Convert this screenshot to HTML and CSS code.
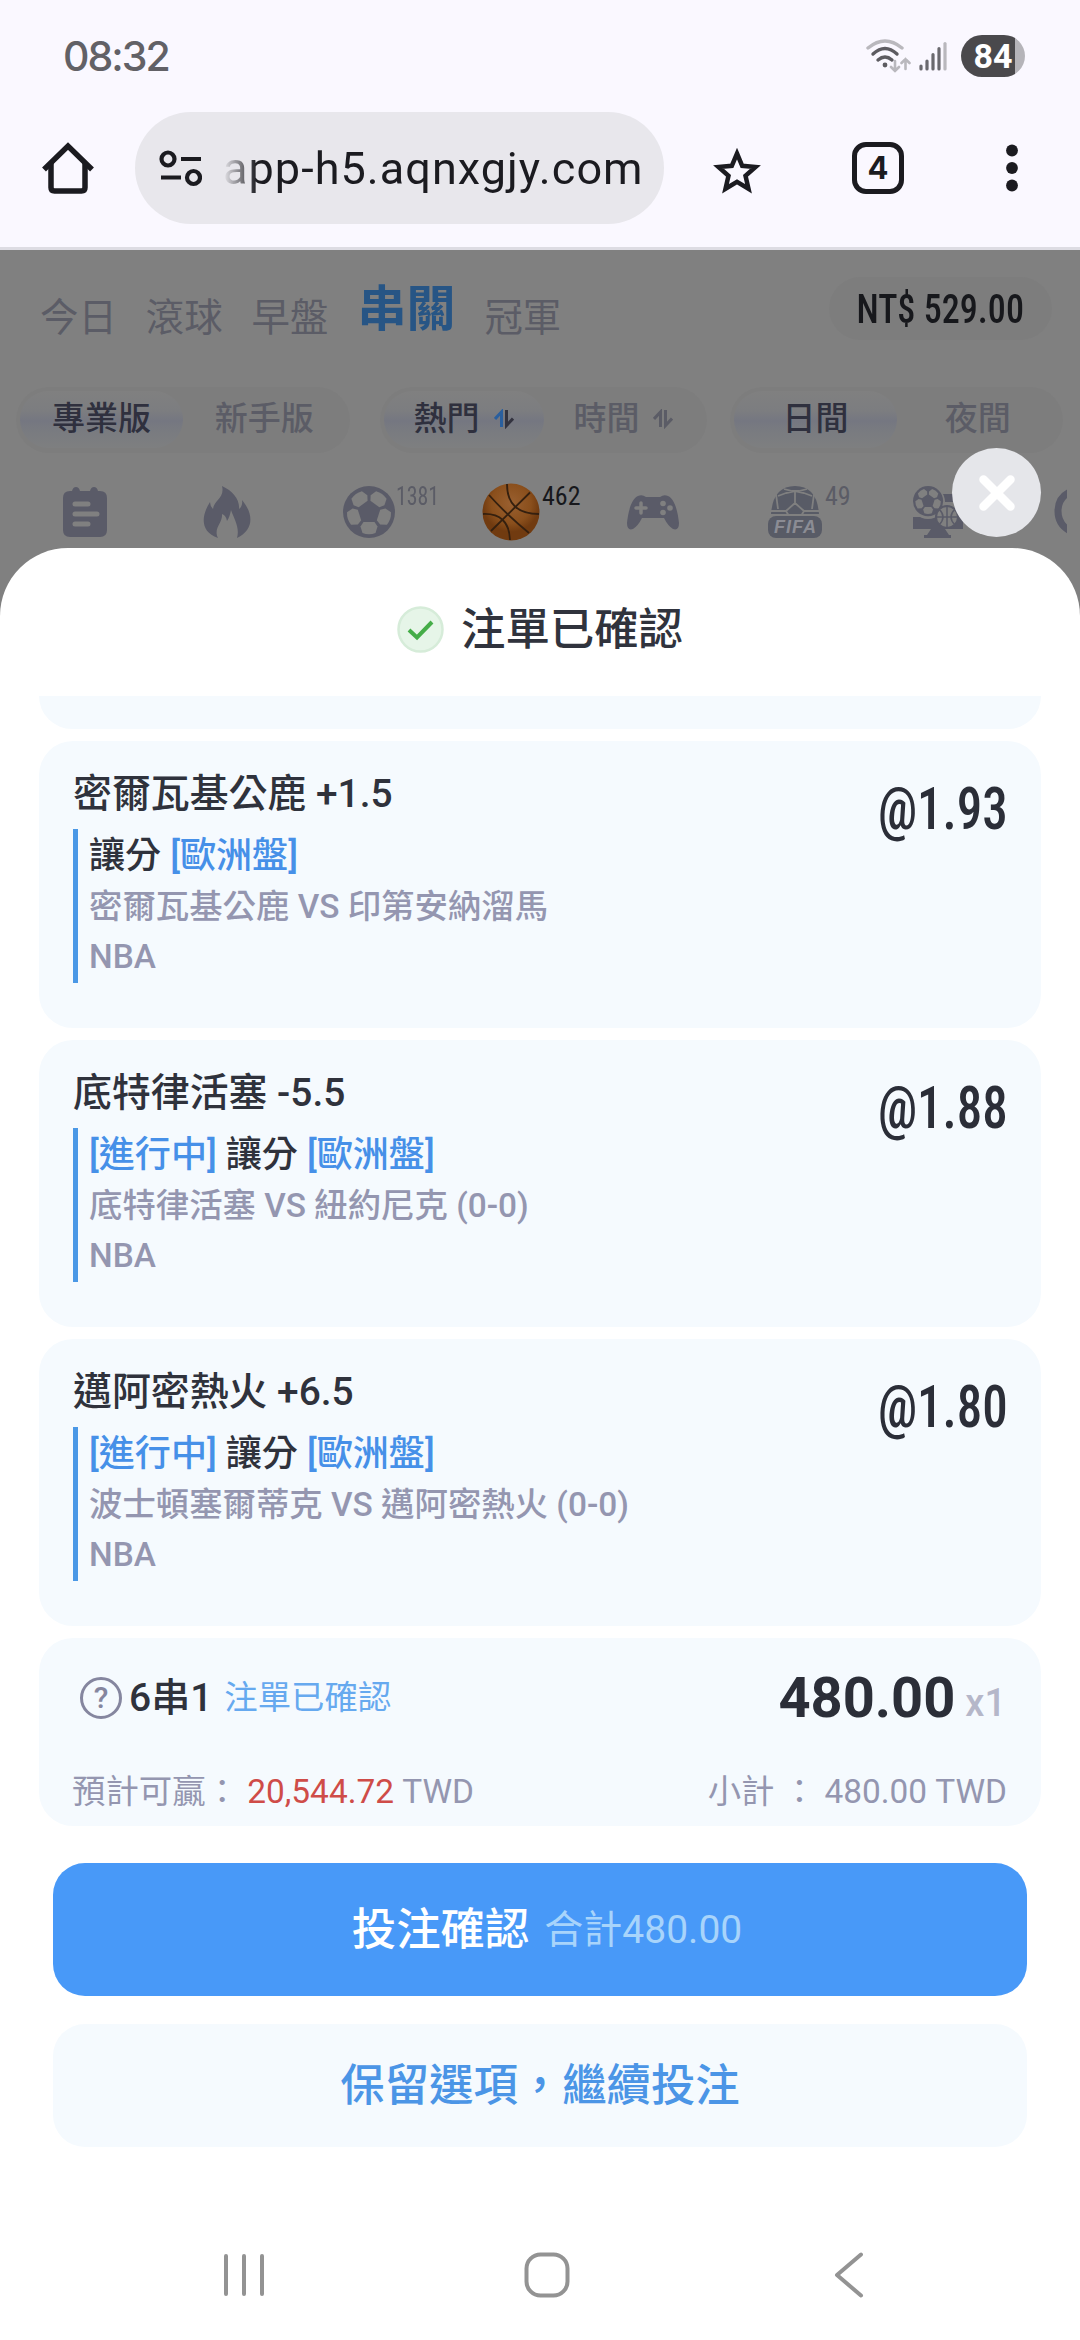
FILE: index.html
```html
<!DOCTYPE html>
<html lang="zh-TW">
<head>
<meta charset="utf-8">
<title>注單已確認</title>
<link rel="stylesheet" href="styles.css">
</head>
<body>
<div class="statusbar">
  <span class="clock">08:32</span>
  <div class="status-icons">
    <svg width="46" height="36" viewBox="0 0 46 36" fill="none" stroke-linecap="round">
      <path d="M3 10Q20-4 37 10" stroke="#b9b8bd" stroke-width="3.4"/>
      <path d="M8 16Q20 5 32 16" stroke="#5d5c61" stroke-width="3.4"/>
      <path d="M13 22Q20 16 27 22" stroke="#5d5c61" stroke-width="3.4"/>
      <circle cx="20" cy="27" r="2.4" fill="#5d5c61"/>
      <path d="M30 23v10M26 29l4 4 4-4M40.500 31V21M36.500 25l4-4 4 4" stroke="#b9b8bd" stroke-width="2.6"/>
    </svg>
    <svg width="28" height="30" viewBox="0 0 28 30" fill="none" stroke-linecap="round" stroke-width="3.2">
      <path d="M2 25v3M8 20v8M14 13.500v14.500M20 7.500v20.500" stroke="#6a696e"/>
      <path d="M26 2.500v25.500" stroke="#b9b8bd"/>
    </svg>
    <span class="battery">84</span>
  </div>
</div>
<div class="toolbar">
  <svg class="home" width="52" height="52" viewBox="0 0 52 52" fill="none" stroke="#1b1b20" stroke-width="5.500"><path d="M2 27.500L26 4l24 23.500"/><path d="M9 21v24.500q0 3.500 3.500 3.500h27q3.500 0 3.500-3.500V21"/></svg>
  <div class="urlbar">
    <svg width="43" height="38" viewBox="0 0 43 38" fill="none" stroke="#1b1b20" stroke-width="4.200"><circle cx="9" cy="10" r="6.500"/><path d="M22 10h20M2 28.500h20"/><circle cx="34.500" cy="28.500" r="6.500"/></svg>
    <span class="url">app-h5.aqnxgjy.com</span>
  </div>
  <svg class="star" width="50" height="48" viewBox="0 0 50 48" fill="none" stroke="#1b1b20" stroke-width="4.500"><path d="M25 6.500l5.200 12.300 13.300 1.200-10 8.800 3 13L25 34.900l-11.500 6.900 3-13-10-8.800 13.300-1.200z"/></svg>
  <span class="tabcount">4</span>
  <svg class="dots" width="12" height="48" viewBox="0 0 12 48" fill="#1b1b20"><circle cx="6" cy="6.500" r="5.900"/><circle cx="6" cy="24" r="5.900"/><circle cx="6" cy="41.500" r="5.900"/></svg>
</div>
<div class="app">
  <div class="tabs">
    <span>今日</span><span>滾球</span><span>早盤</span><span class="on">串關</span><span>冠軍</span>
    <div class="balance"><b>NT$ 529.00</b></div>
  </div>
  <div class="segments">
    <div class="seg"><span class="on">專業版</span><span>新手版</span></div>
    <div class="seg s2"><span class="on">熱門<svg width="20" height="20" viewBox="0 0 20 20" fill="none" stroke-width="3"><path d="M1 10l6.500-7v15" stroke="#2a5f9e"/><path d="M12.500 1v15.500l6.500-7" stroke="#33333f"/></svg></span><span>時間<svg width="20" height="20" viewBox="0 0 20 20" fill="none" stroke="#5b5c66" stroke-width="3"><path d="M1 10l6.500-7v15M12.500 1v15.500l6.500-7"/></svg></span></div>
    <div class="seg s3"><span class="on">日間</span><span>夜間</span></div>
  </div>
  <div class="sports">
    <div class="sport"><svg width="46" height="52" viewBox="0 0 46 52"><path fill="#5a5b68" d="M8 5h2q1-4 4-4t4 4h10q1-4 4-4t4 4h2q7 0 7 7v32q0 7-7 7H8q-7 0-7-7V12q0-7 7-7z"/><path d="M13 18h13M13 28h22M13 38h13" stroke="#808080" stroke-width="5" stroke-linecap="round"/></svg></div>
    <div class="sport"><svg width="48" height="54" viewBox="0 0 48 54"><path fill="#5a5b68" d="M19 1C30 6 37 15 36 24q4-3 3-9c11 13 13 29-5 38 3-11-3-19-6-28-1 5-2 8-4 11-1-4-2-6-5-7 1 9-9 14-4 24C-3 47-2 31 7 17q0 4 3 7C11 15 22 13 19 1z"/></svg></div>
    <div class="sport"><svg width="52" height="52" viewBox="0 0 52 52"><defs><g id="soccer"><circle cx="26" cy="26" r="26" fill="#5a5b68"/><g fill="#808080"><path id="panel" d="M17.500 40.500l3-4.500h11l3 4.500-2 6.500q-6.500 2.500-13 0z"/><use href="#panel" transform="rotate(72 26 26)"/><use href="#panel" transform="rotate(144 26 26)"/><use href="#panel" transform="rotate(216 26 26)"/><use href="#panel" transform="rotate(288 26 26)"/></g></g></defs><use href="#soccer"/></svg><em class="long">1381</em></div>
    <div class="sport ball"><svg width="58" height="58" viewBox="0 0 58 58"><defs><radialGradient id="bg" cx=".5" cy=".35"><stop offset="0" stop-color="#9a6030"/><stop offset=".7" stop-color="#8a4f1c"/><stop offset="1" stop-color="#713b10"/></radialGradient></defs><circle cx="29" cy="29" r="28.500" fill="url(#bg)"/><path d="M9 48L48 9.500M7 12q18 20 40 38M25 1q0 30 32 30M1 31q26-1 27 26" fill="none" stroke="#35200f" stroke-width="1.800"/></svg><em>462</em></div>
    <div class="sport"><svg width="54" height="36" viewBox="0 0 54 36"><path fill="#5a5b68" d="M12 2q4-2 8 1h14q4-3 8-1c7 3 10 17 11 27q0 8-6 6-5-3-9-11H16q-4 8-9 11-6 2-6-6C2 19 5 5 12 2z"/><path d="M10 14h10M15 9v10" stroke="#808080" stroke-width="3.500" stroke-linecap="round"/><g fill="#808080"><circle cx="37" cy="9.500" r="2.800"/><circle cx="37" cy="18.500" r="2.800"/><circle cx="44" cy="14" r="2.800"/></g></svg></div>
    <div class="sport fifa"><svg width="56" height="54" viewBox="0 0 56 54"><path fill="#585b66" d="M4 29Q6 1 28 1t24 28z"/><path d="M17 4l8 2h7l8-2M9 9l2 15M47 9l-2 15M11 11l8-3 9-2 9 2 8 3M3 26h16l9-8 9 8h16M19 26l3 5M37 26l-3 5M28 18V6" fill="none" stroke="#808080" stroke-width="1.800"/><rect x="-1" y="29" width="58" height="4" fill="#808080"/><rect x="1" y="31" width="54" height="22" rx="8" fill="#585b66"/><text x="28" y="48" text-anchor="middle" font-family="Liberation Sans" font-size="18" font-weight="700" font-style="italic" fill="#8b8c94" textLength="42">FIFA</text></svg><em>49</em></div>
    <div class="sport"><svg width="52" height="54" viewBox="0 0 52 54"><path fill="#5a5b68" d="M2 32h50v12H34l4 6h2v3H13v-3h3l4-6H2zM30 9h22v8H32z"/><circle cx="17" cy="17" r="17" fill="#808080"/><use href="#soccer" transform="translate(2 1) scale(.58)"/><circle cx="36" cy="32" r="11" fill="#808080" stroke="#5a5b68" stroke-width="2"/><path d="M36 21v22M25 32h22M28 24q8 8 0 16M44 24q-8 8 0 16" fill="none" stroke="#5a5b68" stroke-width="1.500"/></svg></div>
    <div class="sport last"><svg width="13" height="52" viewBox="0 0 13 52" fill="none" stroke="#5a5b68" stroke-width="7"><path d="M21 4Q4 9 4 25t17 22"/><path d="M18 20q-6 5 0 12" stroke-width="2"/></svg></div>
  </div>
</div>
<div class="sheet">
  <button class="close" aria-label="關閉"><svg width="38" height="38" viewBox="0 0 38 38"><path d="M5.500 5.500l27 27M32.500 5.500l-27 27" stroke="#fff" stroke-width="8.500" stroke-linecap="round"/></svg></button>
  <h1><svg width="47" height="47" viewBox="0 0 47 47"><circle cx="23.500" cy="23.500" r="22" fill="#e6f5e8" stroke="#d6ecd9" stroke-width="2.500"/><path d="M12 24l8 7.500L35 16" fill="none" stroke="#45ad48" stroke-width="4"/></svg><span>注單已確認</span></h1>
  <div class="list">
    <div class="card stub"></div>
    <div class="card">
      <div class="info"><h2>密爾瓦基公鹿 +1.5</h2>
        <div class="detail"><p class="play">讓分 <i>[歐洲盤]</i></p><p>密爾瓦基公鹿 VS 印第安納溜馬</p><p>NBA</p></div></div>
      <span class="odds">@1.93</span>
    </div>
    <div class="card">
      <div class="info"><h2>底特律活塞 -5.5</h2>
        <div class="detail"><p class="play"><i>[進行中]</i> 讓分 <i>[歐洲盤]</i></p><p>底特律活塞 VS 紐約尼克 (0-0)</p><p>NBA</p></div></div>
      <span class="odds">@1.88</span>
    </div>
    <div class="card">
      <div class="info"><h2>邁阿密熱火 +6.5</h2>
        <div class="detail"><p class="play"><i>[進行中]</i> 讓分 <i>[歐洲盤]</i></p><p>波士頓塞爾蒂克 VS 邁阿密熱火 (0-0)</p><p>NBA</p></div></div>
      <span class="odds">@1.80</span>
    </div>
    <div class="summary">
      <div class="row top">
        <span class="help">?</span><span class="combo">6串1</span><span class="state">注單已確認</span>
        <span class="stake">480.00</span><span class="times">x1</span>
      </div>
      <div class="row"><span>預計可贏： <b>20,544.72</b> TWD</span><span class="sub">小計 ： 480.00 TWD</span></div>
    </div>
  </div>
  <button class="confirm">投注確認<small>合計480.00</small></button>
  <button class="keep">保留選項，繼續投注</button>
</div>
<div class="navbar">
  <svg width="42" height="46" viewBox="0 0 42 46" stroke="#939393" stroke-width="4" stroke-linecap="round"><path d="M3 4v38M21 4v38M39 4v38"/></svg>
  <svg class="nav-home" width="46" height="46" viewBox="0 0 46 46" fill="none" stroke="#939393" stroke-width="4"><rect x="2.500" y="2.500" width="41" height="41" rx="14"/></svg>
  <svg width="30" height="46" viewBox="0 0 30 46" fill="none" stroke="#939393" stroke-width="4" stroke-linecap="round" stroke-linejoin="round"><path d="M27 2.500L3 23l24 20.500"/></svg>
</div>
</body>
</html>
```
FILE: styles.css
```css
* { box-sizing: border-box; margin: 0; padding: 0; }
body { width: 1080px; height: 2340px; overflow: hidden; background: #fff; font-family: Roboto, "Noto Sans CJK TC", sans-serif; display: flex; flex-direction: column; }
button { border: 0; font: inherit; }
i, em { font-style: normal; }
svg { display: block; flex: none; }

.statusbar { height: 112px; background: #faf8ff; display: flex; justify-content: space-between; padding: 35px 55px 0 63px; flex: none; }
.clock { font: 500 41px/42px Inter, sans-serif; letter-spacing: -2px; color: #626166; }
.status-icons { display: flex; height: 42px; align-items: center; gap: 8px; }
.battery { width: 64px; height: 42px; margin-left: 6px; border-radius: 21px; background: linear-gradient(90deg, #4a494c 54px, #b5b4b9 54px); color: #fff; font-weight: 700; font-size: 34px; line-height: 43px; text-align: center; }

.toolbar { height: 138px; background: #faf8ff; border-bottom: 3px solid #dddce3; display: flex; flex: none; padding-left: 42px; }
.home { margin-top: 30px; }
.urlbar { width: 529px; height: 112px; margin-left: 41px; border-radius: 56px; background: #e8e7ec; display: flex; align-items: center; padding-left: 24px; }
.url { margin: 2px 0 0 21px; font-size: 45px; line-height: 60px; letter-spacing: 1.05px; color: #1b1b20; white-space: nowrap; -webkit-mask-image: linear-gradient(90deg, transparent 0, #000 34px); mask-image: linear-gradient(90deg, transparent 0, #000 34px); }
.star { margin: 35px 0 0 48px; }
.tabcount { margin: 30px 0 0 90px; width: 52px; height: 52px; border: 5.5px solid #1b1b20; border-radius: 14px; font: 700 31px/42px Inter, sans-serif; text-align: center; color: #1b1b20; }
.dots { margin: 32px 0 0 102px; }

.app { height: 298px; background: #808080; color: #5b5c66; flex: none; overflow: hidden; }
.tabs { height: 137px; display: flex; gap: 29px; padding-left: 40px; font-size: 38.4px; line-height: 56px; }
.tabs span { margin-top: 40px; }
.tabs .on { margin-top: 32px; font-size: 49px; font-weight: 700; color: #275585; }
.balance { margin: 27px 28px 0 auto; width: 223px; height: 63px; border-radius: 32px; background: #7d7d7d; display: flex; align-items: center; justify-content: center; }
.balance b { font-family: "Roboto Condensed", Roboto, sans-serif; font-size: 41px; font-weight: 500; color: #17181c; transform: scaleX(.88); white-space: nowrap; }
.segments { display: flex; padding: 0 17px 0 16px; gap: 27px; }
.seg { width: 334px; height: 66px; border-radius: 33px; background: #7d7d7d; display: flex; padding: 4px; font-size: 33px; font-weight: 500; }
.seg.s2 { width: 328px; margin-left: 3px; }
.seg.s3 { width: 333px; margin-left: -4px; }
.seg span { flex: 1; display: flex; align-items: center; justify-content: center; gap: 14px; height: 57px; border-radius: 29px; padding-bottom: 7px; }
.seg svg { margin-top: 6px; }
.seg .on { color: #2f303e; background: linear-gradient(#808080, #7c7d80 35%, #757781 52%, #797b80 70%, #7e7f80); }
.sports { display: flex; padding-top: 27px; height: 95px; }
.sport { position: relative; height: 64px; display: flex; align-items: center; justify-content: center; width: 142px; flex: none; }
.sport:first-child { margin-left: 14px; }
.sport em { position: absolute; left: 98px; top: 1px; font-family: "Roboto Condensed", Roboto, sans-serif; font-size: 26px; line-height: 30px; }
.sport .long { transform: scaleX(.84); transform-origin: 0 0; }
.ball em { color: #17181c; left: 102px; }
.fifa em { left: 101px; }
.sport.last { width: 13px; margin-left: 46px; }

.sheet { position: relative; height: 1672px; background: #fff; flex: none; border-radius: 68px 68px 0 0; }
.sheet::before { content: ""; position: absolute; z-index: -1; left: 0; right: 0; top: 0; height: 70px; background: #808080; }
.close { position: absolute; left: 952px; top: -100px; width: 89px; height: 89px; border-radius: 50%; background: #e5e6ea; display: flex; align-items: center; justify-content: center; }
h1 { height: 148px; display: flex; justify-content: center; align-items: center; gap: 17px; font-size: 44.4px; font-weight: 500; color: #30333d; padding-top: 14px; }
h1 span { margin-top: -7px; }
.list { padding: 0 39px; display: flex; flex-direction: column; gap: 12px; height: 1130px; }
.card, .summary { background: #f5fafe; border-radius: 34px; }
.card { height: 287px; flex: none; display: flex; justify-content: space-between; padding: 28px 33px 0 34px; }
.card.stub { height: 33px; border-radius: 0 0 34px 34px; padding: 0; }
h2 { font-size: 38.9px; line-height: 50px; font-weight: 500; color: #2f323c; white-space: nowrap; }
.detail { margin-top: 10px; height: 154px; border-left: 5px solid #4a98e6; padding: 1px 0 0 11px; font-size: 33.4px; line-height: 50px; color: #9496b0; font-weight: 500; }
.detail .play { font-size: 36.1px; line-height: 52px; color: #2f323c; }
.play i { color: #4690e8; }
.odds { font-family: "Roboto Condensed", Roboto, sans-serif; font-size: 60px; line-height: 79px; font-weight: 500; color: #2b2e38; transform: scaleX(.85); transform-origin: 100% 0; }
.summary { height: 188px; flex: none; padding: 0 34px 0 33px; color: #9496b0; font-size: 33.4px; }
.row { display: flex; justify-content: space-between; line-height: 50px; white-space: nowrap; }
.row b { color: #cf4c48; font-weight: 400; }
.row.top { height: 129px; justify-content: flex-start; align-items: center; padding: 0 1px 10px 8px; }
.help { width: 42px; height: 42px; border: 3.5px solid #85869f; border-radius: 50%; font-size: 30px; line-height: 36px; font-weight: 500; text-align: center; color: #85869f; }
.combo { margin-left: 7px; font-size: 39px; font-weight: 500; color: #2f323c; }
.state { margin-left: 12px; color: #66a9ef; }
.stake { margin-left: auto; font-size: 56px; font-weight: 700; color: #2b2e38; }
.times { margin: 10px 0 0 10px; font-size: 38px; font-weight: 500; color: #b5b7c9; }
.confirm, .keep { display: flex; width: 974px; margin-left: 53px; border-radius: 32px; align-items: center; justify-content: center; font-size: 44.4px; font-weight: 500; }
.confirm { margin-top: 37px; height: 133px; background: #4899f8; color: #fff; padding: 0 0 8px 14px; }
.confirm small { margin-left: 15px; font-size: 39px; font-weight: 400; color: #a8d4fb; }
.keep { margin-top: 28px; height: 123px; background: #f5fafe; color: #4b95e6; padding-bottom: 8px; }
.navbar { height: 120px; background: #fff; display: flex; padding: 32px 216px 0 223px; justify-content: space-between; }
.nav-home { position: relative; left: -3px; }
```
